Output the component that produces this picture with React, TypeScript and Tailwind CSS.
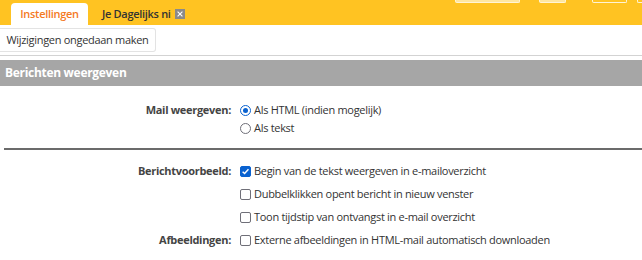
import { useState } from 'react'

const font = { fontFamily: '"Open Sans", "Noto Sans", sans-serif' }

function Radio({ checked }: { checked: boolean }) {
  return (
    <span className={`inline-flex h-[11px] w-[11px] shrink-0 items-center justify-center rounded-full border ${checked ? 'border-[#0a62d0]' : 'border-[#6f6f78]'} bg-white`}>
      {checked && <span className="h-[5px] w-[5px] rounded-full bg-[#0a62d0]" />}
    </span>
  )
}

function Check({ checked }: { checked: boolean }) {
  return (
    <span className={`inline-flex h-[11px] w-[11px] shrink-0 items-center justify-center rounded-[2px] border ${checked ? 'border-[#0a62d0] bg-[#0a62d0]' : 'border-[#6f6f78] bg-white'}`}>
      {checked && (
        <svg viewBox="0 0 10 10" className="h-[9px] w-[9px]">
          <path d="M1.8 5.2 L4 7.3 L8.3 2.5" fill="none" stroke="white" strokeWidth="1.6" />
        </svg>
      )}
    </span>
  )
}

export default function App() {
  const [mail] = useState<'html' | 'tekst'>('html')
  const opts = [
    { label: 'Berichtvoorbeeld:', text: 'Begin van de tekst weergeven in e-mailoverzicht', on: true },
    { label: '', text: 'Dubbelklikken opent bericht in nieuw venster', on: false },
    { label: '', text: 'Toon tijdstip van ontvangst in e-mail overzicht', on: false },
    { label: 'Afbeeldingen:', text: 'Externe afbeeldingen in HTML-mail automatisch downloaden', on: false },
  ]

  return (
    <div className="h-[260px] w-[642px] overflow-hidden bg-white text-[11px] tracking-[-0.3px] text-[#333]" style={font}>
      {/* top bar */}
      <div className="flex h-[25px] items-end bg-[#ffc322]">
        <div className="ml-[11px] flex h-[22px] w-[77px] items-center justify-center rounded-t-[4px] bg-white font-semibold text-[#f47a1f]">
          Instellingen
        </div>
        <div className="ml-[14px] flex h-[22px] items-center font-semibold text-[#333]">
          Je Dagelijks ni
          <span className="ml-[4px] inline-flex h-[10px] w-[10px] items-center justify-center bg-[#8a8a8a]">
            <svg viewBox="0 0 10 10" className="h-[8px] w-[8px]">
              <path d="M2 2 L8 8 M8 2 L2 8" stroke="white" strokeWidth="1.4" />
            </svg>
          </span>
        </div>
        <div className="ml-auto flex h-full items-start">
          <div className="h-[3px] w-[65px] rounded-b-[2px] border border-t-0 border-[#fff4d6] bg-[#ffe6a0]" />
          <div className="ml-[19px] h-[3px] w-[27px] rounded-b-[2px] border border-t-0 border-[#fff4d6] bg-[#ffe6a0]" />
          <div className="ml-[26px] h-[3px] w-[35px] rounded-b-[2px] border border-t-0 border-[#fff4d6]" />
          <div className="ml-[10px] h-[3px] w-[5px] rounded-bl-[2px] border border-t-0 border-r-0 border-[#fff4d6]" />
        </div>
      </div>

      {/* toolbar */}
      <div className="flex h-[31px] items-center border-b border-[#d3d3d3]">
        <button className="h-[24px] w-[156px] whitespace-nowrap rounded-r-[3px] border border-l-0 border-[#e3e3e3] bg-white text-[11px] tracking-[-0.3px] text-[#333]">
          Wijzigingen ongedaan maken
        </button>
      </div>

      <div className="mt-[4px] flex h-[26px] items-center bg-[#a6a6a6] pl-[5px] text-[12px] font-bold text-white">
        Berichten weergeven
      </div>

      <div className="grid grid-cols-[231px_1fr] gap-x-[9px] pt-[15px]">
        <div className="flex h-[18px] items-center justify-end font-bold text-[#444]">Mail weergeven:</div>
        <label className="flex h-[18px] items-center gap-[3px]">
          <Radio checked={mail === 'html'} />
          <span>Als HTML (indien mogelijk)</span>
        </label>
        <div />
        <label className="flex h-[18px] items-center gap-[3px]">
          <Radio checked={mail === 'tekst'} />
          <span>Als tekst</span>
        </label>
      </div>

      <div className="ml-[4px] mt-[11px] h-[2px] bg-[#6b6b6b]" />

      <div className="grid grid-cols-[231px_1fr] gap-x-[9px] gap-y-[5px] pt-[12px]">
        {opts.map((o, i) => (
          <div key={i} className="contents">
            <div className="flex h-[18px] items-center justify-end font-bold text-[#444]">{o.label}</div>
            <label className="flex h-[18px] items-center gap-[3px]">
              <Check checked={o.on} />
              <span>{o.text}</span>
            </label>
          </div>
        ))}
      </div>
    </div>
  )
}
